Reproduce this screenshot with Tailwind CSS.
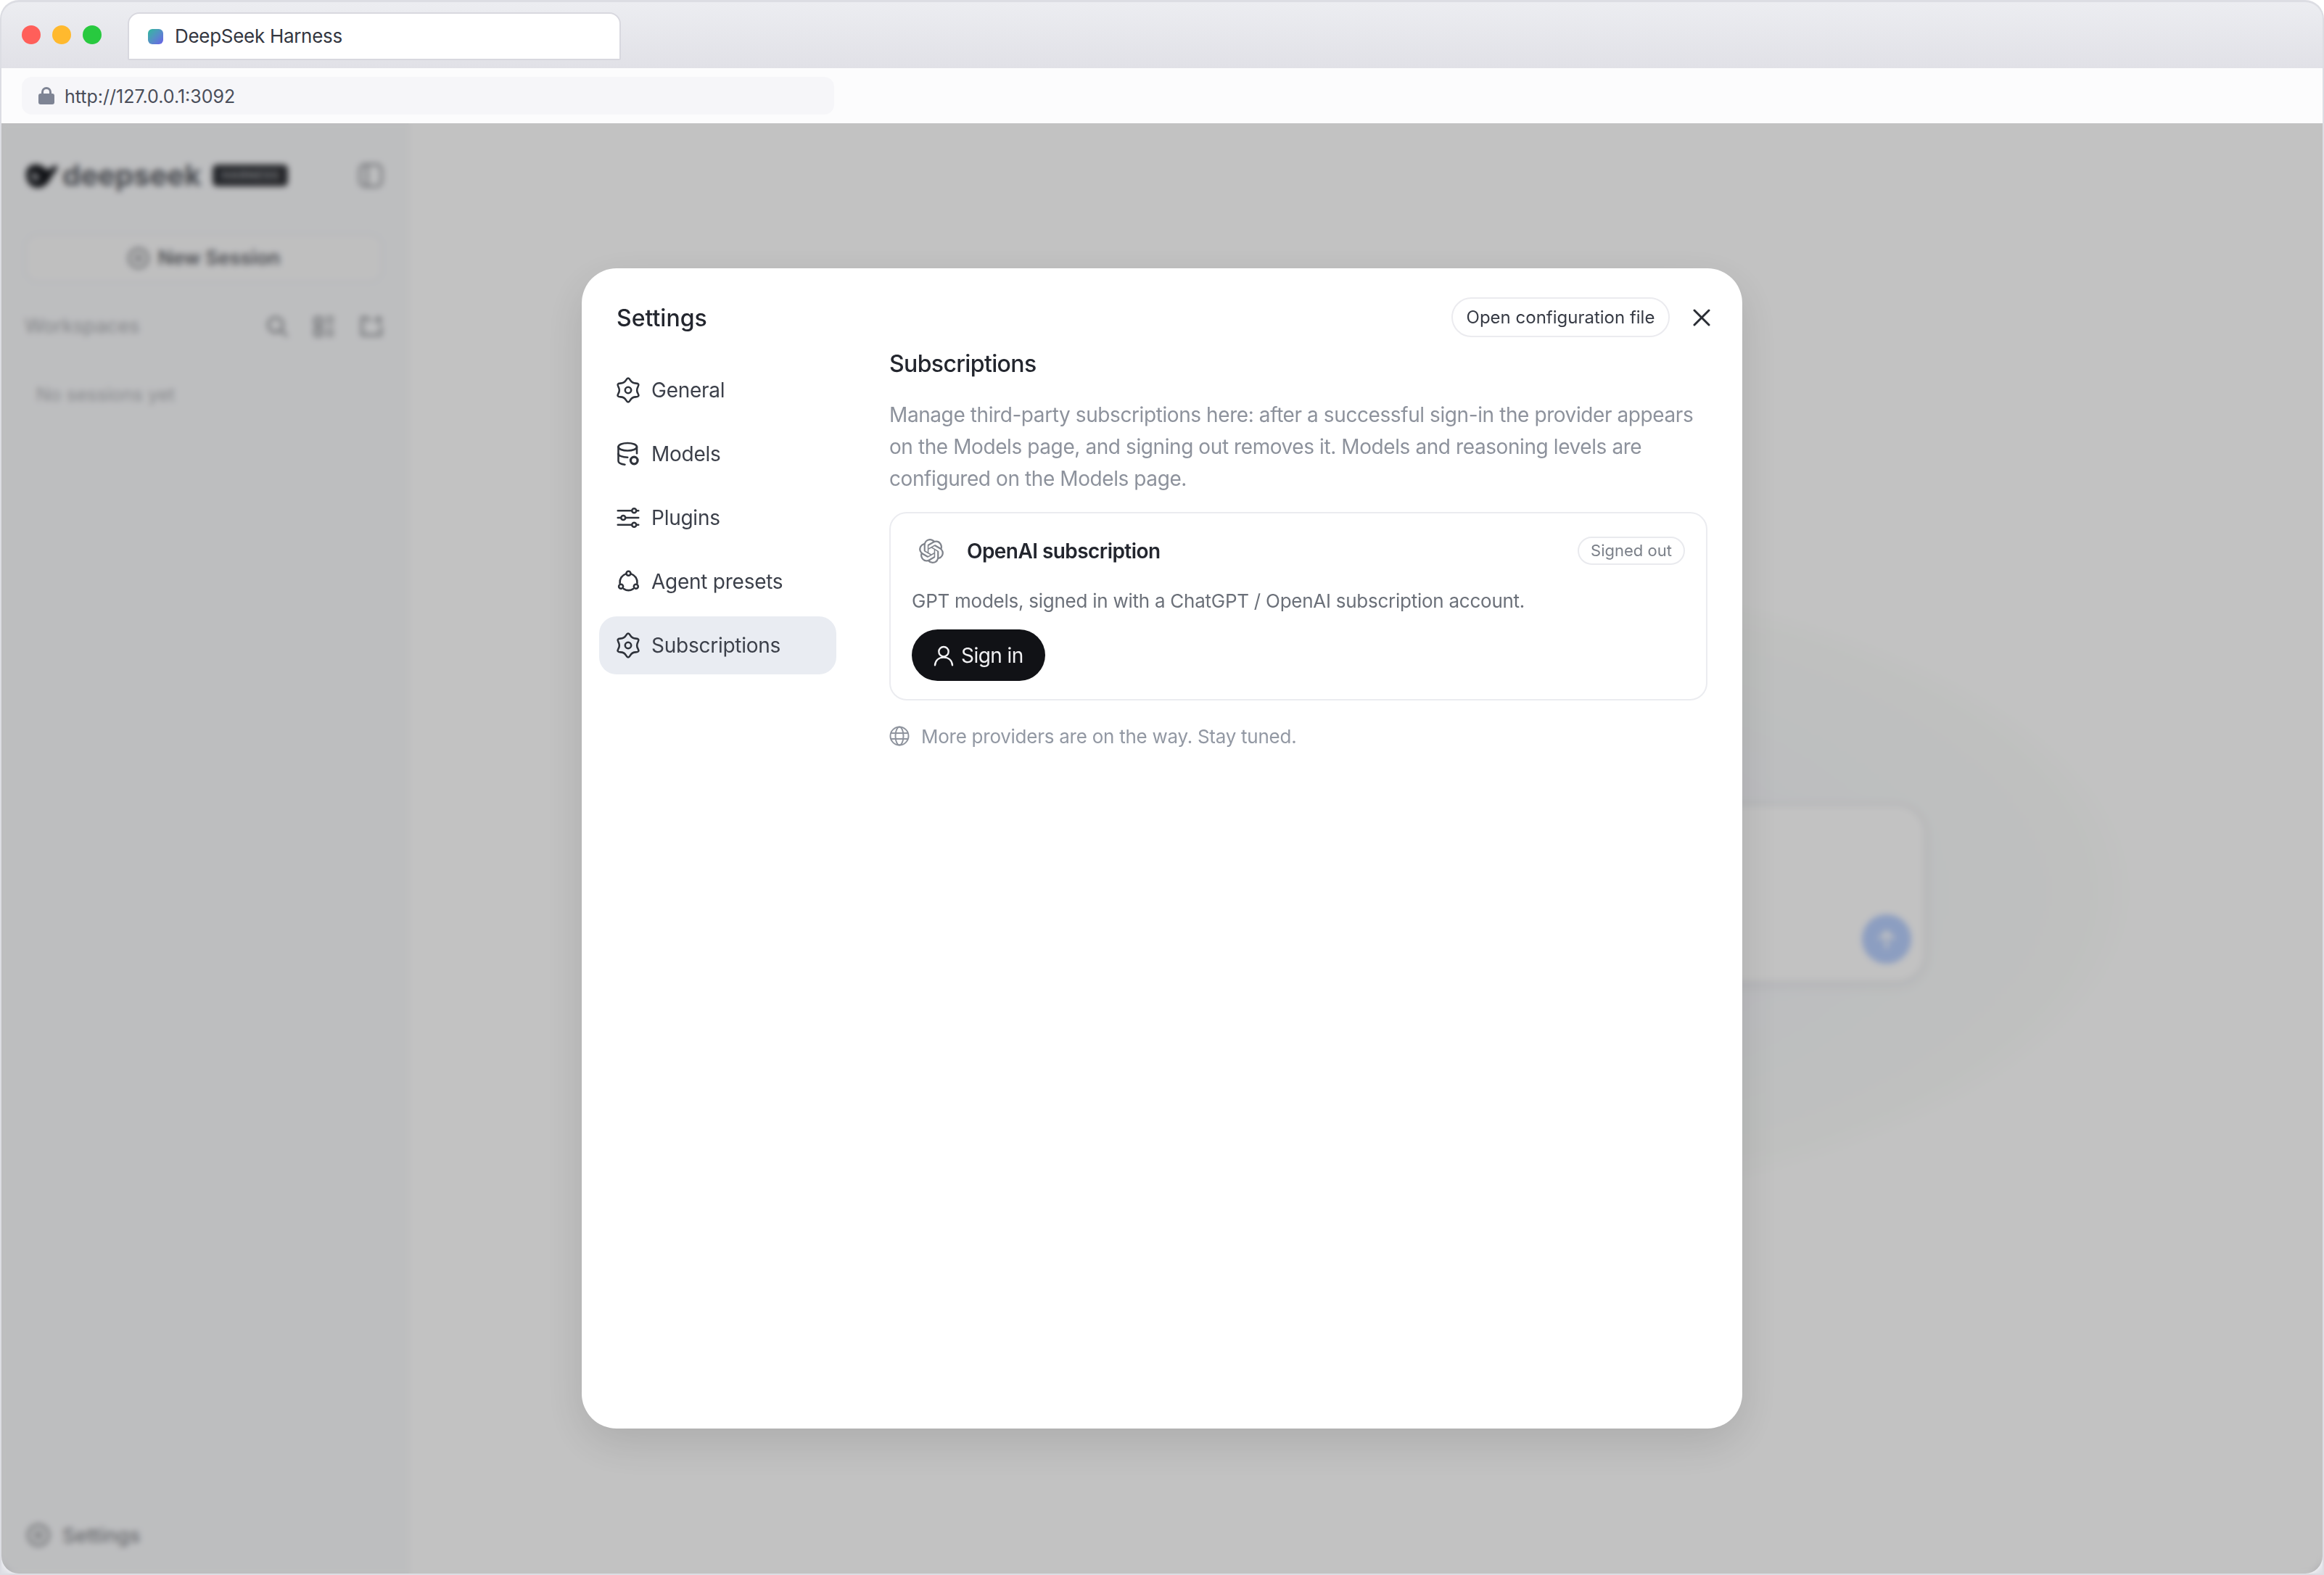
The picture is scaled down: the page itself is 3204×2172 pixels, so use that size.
<!DOCTYPE html>
<html lang="en">

<head>
    <meta charset="utf-8">
    <title>DeepSeek Harness</title>
    <script src="https://cdn.jsdelivr.net/npm/@tailwindcss/browser@4"></script>
</head>

<body class="w-[3204px] h-[2172px] overflow-hidden bg-white [font-family:Inter,sans-serif] antialiased">
    <div class="w-full h-full flex flex-col rounded-t-[26px] bg-[#dfe0e6] border-2 border-t-[3px] border-[#dcdde3] overflow-hidden">

        <!-- tab strip -->
        <div class="h-[91px] shrink-0 flex items-end pl-[28px] bg-linear-to-b from-[#ecedf1] to-[#e1e1e7]">
            <div class="self-center flex gap-[16px] -mt-[2px]">
                <span class="w-[26px] h-[26px] rounded-full bg-[#ff5f5a]"></span>
                <span class="w-[26px] h-[26px] rounded-full bg-[#ffb92e]"></span>
                <span class="w-[26px] h-[26px] rounded-full bg-[#28c93f]"></span>
            </div>
            <div class="ml-[36px] mb-[11px] w-[680px] h-[66px] flex items-center pl-[26px] gap-[16px] bg-white border-2 border-[#d8d8df] rounded-t-[16px] rounded-b-[2px]">
                <span class="w-[21px] h-[21px] rounded-[6px] bg-linear-to-br from-[#27b99a] to-[#6a5be8]"></span>
                <span class="text-[26px] leading-[32px] tracking-[-0.3px] text-[#33363f]">DeepSeek Harness</span>
            </div>
        </div>

        <!-- address bar -->
        <div class="h-[76px] shrink-0 flex items-center pl-[28px] bg-[#fcfcfd]">
            <div class="w-[1120px] h-[52px] flex items-center pl-[23px] gap-[14px] rounded-[14px] bg-[#f6f6f9]">
                <svg class="w-[22px] h-[24px]" viewBox="0 0 22 24" fill="#7e8494">
                    <path d="M4 10V7a7 7 0 0 1 14 0v3h-3V7a4 4 0 0 0-8 0v3z"/>
                    <rect x="0" y="9" width="22" height="15" rx="3"/>
                </svg>
                <span class="mt-[2px] text-[25px] leading-[32px] text-[#4a4e5a]">http://127.0.0.1:3092</span>
            </div>
        </div>

        <!-- page under the dialog -->
        <div class="relative flex-1 min-h-0 flex rounded-b-[24px] overflow-hidden">
            <aside class="w-[561px] shrink-0 flex flex-col pl-[32px] pr-[34px] bg-[#f9fafc] border-r border-[#f4f5f7]">
                <div class="mt-[54px] h-[36px] flex items-center">
                    <svg class="w-[46px] h-[36px]" viewBox="0 0 46 36" fill="#17191e">
                        <path d="M2 16C2 7 9 2 18 3c6 1 10 4 13 8l9-6c2-1 5 0 6 0-2 6-5 10-8 13-4 10-11 17-20 17C8 35 2 27 2 16z"/>
                        <path d="M9 14c4-1 9 2 12 7l-5 5C12 26 8 20 9 14z" fill="#9fa1a6"/>
                    </svg>
                    <span class="ml-[6px] text-[40px] leading-[36px] font-bold text-[#5f6269]">deepseek</span>
                    <span class="ml-[16px] w-[104px] h-[30px] flex items-center justify-center rounded-[6px] bg-[#33353a] text-[15px] font-semibold tracking-[1px] text-[#a7a9ae]">HARNESS</span>
                    <svg class="ml-auto w-[34px] h-[34px]" viewBox="0 0 34 34" fill="none" stroke="#8b8d92" stroke-width="3">
                        <rect x="2" y="2" width="30" height="30" rx="7"/>
                        <path d="M12 2v30"/>
                    </svg>
                </div>

                <div class="mt-[62px] h-[68px] flex items-center justify-center gap-[12px] rounded-[18px] bg-[#fbfbfc] border-2 border-[#f0f1f3]">
                    <svg class="w-[30px] h-[30px]" viewBox="0 0 30 30" fill="none" stroke="#7d7f84" stroke-width="3">
                        <circle cx="15" cy="15" r="13"/>
                        <path d="M15 9v12M9 15h12"/>
                    </svg>
                    <span class="text-[27px] leading-[32px] font-semibold text-[#63656b]">New Session</span>
                </div>

                <div class="mt-[44px] h-[32px] flex items-center">
                    <span class="text-[27px] leading-[32px] text-[#a9abb0]">Workspaces</span>
                    <svg class="ml-auto w-[32px] h-[32px]" viewBox="0 0 32 32" fill="none" stroke="#85878c" stroke-width="3">
                        <circle cx="14" cy="14" r="10"/>
                        <path d="M22 22l8 8"/>
                    </svg>
                    <svg class="ml-[34px] w-[30px] h-[30px]" viewBox="0 0 30 30" fill="none" stroke="#85878c" stroke-width="3">
                        <rect x="2" y="3" width="10" height="10" rx="2"/>
                        <rect x="2" y="18" width="10" height="10" rx="2"/>
                        <path d="M18 3h10M18 10h10M18 20h10M18 27h10"/>
                    </svg>
                    <svg class="ml-[34px] w-[32px] h-[30px]" viewBox="0 0 32 30" fill="none" stroke="#85878c" stroke-width="3">
                        <path d="M16 6H12L9 3H3v24h26V14"/>
                        <path d="M26 1v10M21 6h10"/>
                    </svg>
                </div>

                <p class="mt-[63px] ml-[16px] text-[25.5px] leading-[30px] text-[#b0b2b7]">No sessions yet</p>

                <div class="mt-auto mb-[35px] h-[36px] flex items-center gap-[16px] pl-[2px]">
                    <svg class="w-[34px] h-[34px]" viewBox="0 0 34 34" fill="none" stroke="#7f8186" stroke-width="3">
                        <circle cx="17" cy="17" r="14"/>
                        <circle cx="17" cy="17" r="4"/>
                    </svg>
                    <span class="text-[27.5px] leading-[32px] font-medium text-[#85878c]">Settings</span>
                </div>
            </aside>

            <main class="flex-1 min-w-0 flex justify-center pt-[939px] bg-[radial-gradient(ellipse_1064px_460px_at_1319px_1060px,#f6f7fb_0%,#f8f9fc_55%,#fbfdfb_92%,#ffffff_100%)]">
                <div class="w-[1544px] h-[246px] relative rounded-[40px] bg-white border-2 border-dotted border-[#d4d5db] shadow-[0_4px_18px_rgba(30,40,70,0.06)]">
                    <div class="absolute right-[18px] bottom-[24px] w-[68px] h-[68px] rounded-full bg-[#b9d0fe] flex items-center justify-center">
                        <svg class="w-[32px] h-[32px]" viewBox="0 0 32 32" fill="none" stroke="#ffffff" stroke-width="4" stroke-linecap="round" stroke-linejoin="round">
                            <path d="M16 27V6M7 15l9-9 9 9"/>
                        </svg>
                    </div>
                </div>
            </main>

            <!-- settings dialog -->
            <div class="absolute inset-0 flex items-center justify-center bg-black/24 backdrop-blur-[4px]">
                <div class="w-[1600px] h-[1600px] flex rounded-[48px] bg-white tracking-[-0.016em] shadow-[0_20px_60px_rgba(0,0,0,0.12)]">

                    <div class="w-[424px] shrink-0 pl-[24px] pt-[49px]">
                        <h2 class="pl-[24px] h-[40px] text-[32px] leading-[40px] font-medium tracking-normal text-[#23262e]">Settings</h2>
                        <nav class="mt-[39px] w-[327px] flex flex-col gap-[8px]">
                            <a class="h-[80px] flex items-center gap-[14px] pl-[22px] rounded-[24px] text-[28px] text-[#3c404a]">
                                <svg class="w-[36px] h-[36px]" viewBox="0 0 24 24" fill="none" stroke="#2f333b" stroke-width="1.7" stroke-linejoin="round">
                                    <path d="M10.2 2.63Q12 -.5 13.8 2.63Q15.6 5.76 19.2 5.75Q22.83 5.75 21 8.88Q19.2 12 21 15.13Q22.83 18.25 19.2 18.25Q15.6 18.24 13.8 21.37Q12 24.5 10.2 21.37Q8.4 18.24 4.8 18.25Q1.17 18.25 3 15.13Q4.8 12 3 8.88Q1.17 5.75 4.8 5.75Q8.4 5.76 10.2 2.63Z"/>
                                    <circle cx="12" cy="12" r="2.8"/>
                                </svg>
                                General
                            </a>
                            <a class="h-[80px] flex items-center gap-[14px] pl-[22px] rounded-[24px] text-[28px] text-[#3c404a]">
                                <svg class="w-[36px] h-[36px]" viewBox="0 0 24 24" fill="none" stroke="#2f333b" stroke-width="1.7" stroke-linecap="round" stroke-linejoin="round">
                                    <ellipse cx="11.5" cy="5.5" rx="8.5" ry="3.5"/>
                                    <path d="M3 5.5v13c0 1.6 2.4 2.9 6 3.3"/>
                                    <path d="M20 5.5v6"/>
                                    <path d="M3 11.8c0 1.8 3.4 3.3 8.5 3.3"/>
                                    <circle cx="17.5" cy="18" r="3.2" stroke-width="2.2"/>
                                </svg>
                                Models
                            </a>
                            <a class="h-[80px] flex items-center gap-[14px] pl-[22px] rounded-[24px] text-[28px] text-[#3c404a]">
                                <svg class="w-[36px] h-[36px]" viewBox="0 0 24 24" fill="none" stroke="#2f333b" stroke-width="1.7" stroke-linecap="round">
                                    <path d="M2.5 5.5H15M20 5.5h1.5M2.5 12H5M10 12h11.5M2.5 18.5H15M20 18.5h1.5"/>
                                    <circle cx="17.5" cy="5.5" r="2"/>
                                    <circle cx="7.5" cy="12" r="2"/>
                                    <circle cx="17.5" cy="18.5" r="2"/>
                                </svg>
                                Plugins
                            </a>
                            <a class="h-[80px] flex items-center gap-[14px] pl-[22px] rounded-[24px] text-[28px] text-[#3c404a]">
                                <svg class="w-[36px] h-[36px]" viewBox="0 0 24 24" fill="none" stroke="#2f333b" stroke-width="1.7" stroke-linecap="round">
                                    <circle cx="12.3" cy="4.5" r="2"/>
                                    <circle cx="5.4" cy="16.5" r="2"/>
                                    <circle cx="19.2" cy="16.5" r="2"/>
                                    <path d="M10 4.9A8 8 0 0 0 4.4 13.5M14.6 4.9A8 8 0 0 1 20.3 13.5M8 18.7A8 8 0 0 0 16.6 18.7"/>
                                </svg>
                                Agent presets
                            </a>
                            <a class="h-[80px] flex items-center gap-[14px] pl-[22px] rounded-[24px] text-[28px] text-[#3c404a] bg-[#e9ecf2]">
                                <svg class="w-[36px] h-[36px]" viewBox="0 0 24 24" fill="none" stroke="#2f333b" stroke-width="1.7" stroke-linejoin="round">
                                    <path d="M10.2 2.63Q12 -.5 13.8 2.63Q15.6 5.76 19.2 5.75Q22.83 5.75 21 8.88Q19.2 12 21 15.13Q22.83 18.25 19.2 18.25Q15.6 18.24 13.8 21.37Q12 24.5 10.2 21.37Q8.4 18.24 4.8 18.25Q1.17 18.25 3 15.13Q4.8 12 3 8.88Q1.17 5.75 4.8 5.75Q8.4 5.76 10.2 2.63Z"/>
                                    <circle cx="12" cy="12" r="2.8"/>
                                </svg>
                                Subscriptions
                            </a>
                        </nav>
                    </div>

                    <div class="flex-1 min-w-0 flex flex-col pt-[40px] pr-[48px]">
                        <div class="h-[55px] flex items-center justify-end">
                            <button class="h-[55px] w-[301px] rounded-full border-2 border-[#ebebef] text-[24px] leading-[32px] tracking-normal text-[#363a44]">Open configuration file</button>
                            <button class="ml-[24px] -mr-[12px] w-[40px] h-[40px] flex items-center justify-center">
                                <svg class="w-[24px] h-[24px]" viewBox="0 0 24 24" fill="none" stroke="#2a2d34" stroke-width="3" stroke-linecap="round">
                                    <path d="M2 2l20 20M22 2L2 22"/>
                                </svg>
                            </button>
                        </div>

                        <h3 class="mt-[17px] text-[32px] leading-[40px] font-medium tracking-[-0.02em] text-[#23262e]">Subscriptions</h3>
                        <p class="mt-[28px] text-[28px] leading-[44px] tracking-[-0.0148em] text-[#8d929c]">Manage third-party subscriptions here: after a successful sign-in the provider appears on the Models page, and signing out removes it. Models and reasoning levels are configured on the Models page.</p>

                        <div class="mt-[24px] h-[260px] flex flex-col pt-[32px] px-[29px] border-2 border-[#ebecf0] rounded-[24px]">
                            <div class="h-[39px] flex items-center">
                                <svg class="ml-[10px] w-[34px] h-[34px]" viewBox="0 0 24 24" fill="#80848c">
                                    <path d="M22.2819 9.8211a5.9847 5.9847 0 0 0-.5157-4.9108 6.0462 6.0462 0 0 0-6.5098-2.9A6.0651 6.0651 0 0 0 4.9807 4.1818a5.9847 5.9847 0 0 0-3.9977 2.9 6.0462 6.0462 0 0 0 .7427 7.0966 5.98 5.98 0 0 0 .511 4.9107 6.051 6.051 0 0 0 6.5146 2.9001A5.9847 5.9847 0 0 0 13.2599 24a6.0557 6.0557 0 0 0 5.7718-4.2058 5.9894 5.9894 0 0 0 3.9977-2.9001 6.0557 6.0557 0 0 0-.7475-7.0729zm-9.022 12.6081a4.4755 4.4755 0 0 1-2.8764-1.0408l.1419-.0804 4.7783-2.7582a.7948.7948 0 0 0 .3927-.6813v-6.7369l2.02 1.1686a.071.071 0 0 1 .038.052v5.5826a4.504 4.504 0 0 1-4.4945 4.4944zm-9.6607-4.1254a4.4708 4.4708 0 0 1-.5346-3.0137l.142.0852 4.783 2.7582a.7712.7712 0 0 0 .7806 0l5.8428-3.3685v2.3324a.0804.0804 0 0 1-.0332.0615L9.74 19.9502a4.4992 4.4992 0 0 1-6.1408-1.6464zM2.3408 7.8956a4.485 4.485 0 0 1 2.3655-1.9728V11.6a.7664.7664 0 0 0 .3879.6765l5.8144 3.3543-2.0201 1.1685a.0757.0757 0 0 1-.071 0l-4.8303-2.7865A4.504 4.504 0 0 1 2.3408 7.872zm16.5963 3.8558L13.1038 8.364 15.1192 7.2a.0757.0757 0 0 1 .071 0l4.8303 2.7913a4.4944 4.4944 0 0 1-.6765 8.1042v-5.6772a.79.79 0 0 0-.407-.667zm2.0107-3.0231l-.142-.0852-4.7735-2.7818a.7759.7759 0 0 0-.7854 0L9.409 9.2297V6.8974a.0662.0662 0 0 1 .0284-.0615l4.8303-2.7866a4.4992 4.4992 0 0 1 6.6802 4.66zM8.3065 12.863l-2.02-1.1638a.0804.0804 0 0 1-.038-.0567V6.0742a4.4992 4.4992 0 0 1 7.3757-3.4537l-.142.0805L8.704 5.459a.7948.7948 0 0 0-.3927.6813zm1.0976-2.3654l2.602-1.4998 2.6069 1.4998v2.9994l-2.5974 1.4997-2.6067-1.4997Z"/>
                                </svg>
                                <span class="ml-[32px] text-[28px] leading-[36px] font-semibold tracking-[-0.02em] text-[#23262e]">OpenAI subscription</span>
                                <span class="ml-auto h-[39px] w-[148px] flex items-center justify-center rounded-full border-2 border-[#e9eaee] text-[22px] tracking-normal text-[#7b8089]">Signed out</span>
                            </div>
                            <p class="mt-[30px] text-[26px] leading-[40px] text-[#6b7079]">GPT models, signed in with a ChatGPT / OpenAI subscription account.</p>
                            <button class="mt-[19px] w-[184px] h-[71px] flex items-center pl-[28px] gap-[8px] rounded-full bg-[#111216] text-[28px] tracking-[-0.02em] text-[#f1f1f3]">
                                <svg class="w-[32px] h-[32px]" viewBox="0 0 24 24" fill="none" stroke="#f1f1f3" stroke-width="1.8" stroke-linecap="round">
                                    <circle cx="12" cy="8" r="5"/>
                                    <path d="M3 22c.5-5 4-8 9-8s8.5 3 9 8"/>
                                </svg>
                                Sign in
                            </button>
                        </div>

                        <div class="mt-[29px] h-[40px] flex items-center gap-[16px] text-[26px] text-[#9298a3]">
                            <svg class="w-[28px] h-[28px]" viewBox="0 0 28 28" fill="none" stroke="#8f949e" stroke-width="2">
                                <circle cx="14" cy="14" r="12.5"/>
                                <ellipse cx="14" cy="14" rx="5.5" ry="12.5"/>
                                <path d="M2 10h24M2 18h24"/>
                            </svg>
                            More providers are on the way. Stay tuned.
                        </div>
                    </div>
                </div>
            </div>
        </div>
    </div>
</body>

</html>
